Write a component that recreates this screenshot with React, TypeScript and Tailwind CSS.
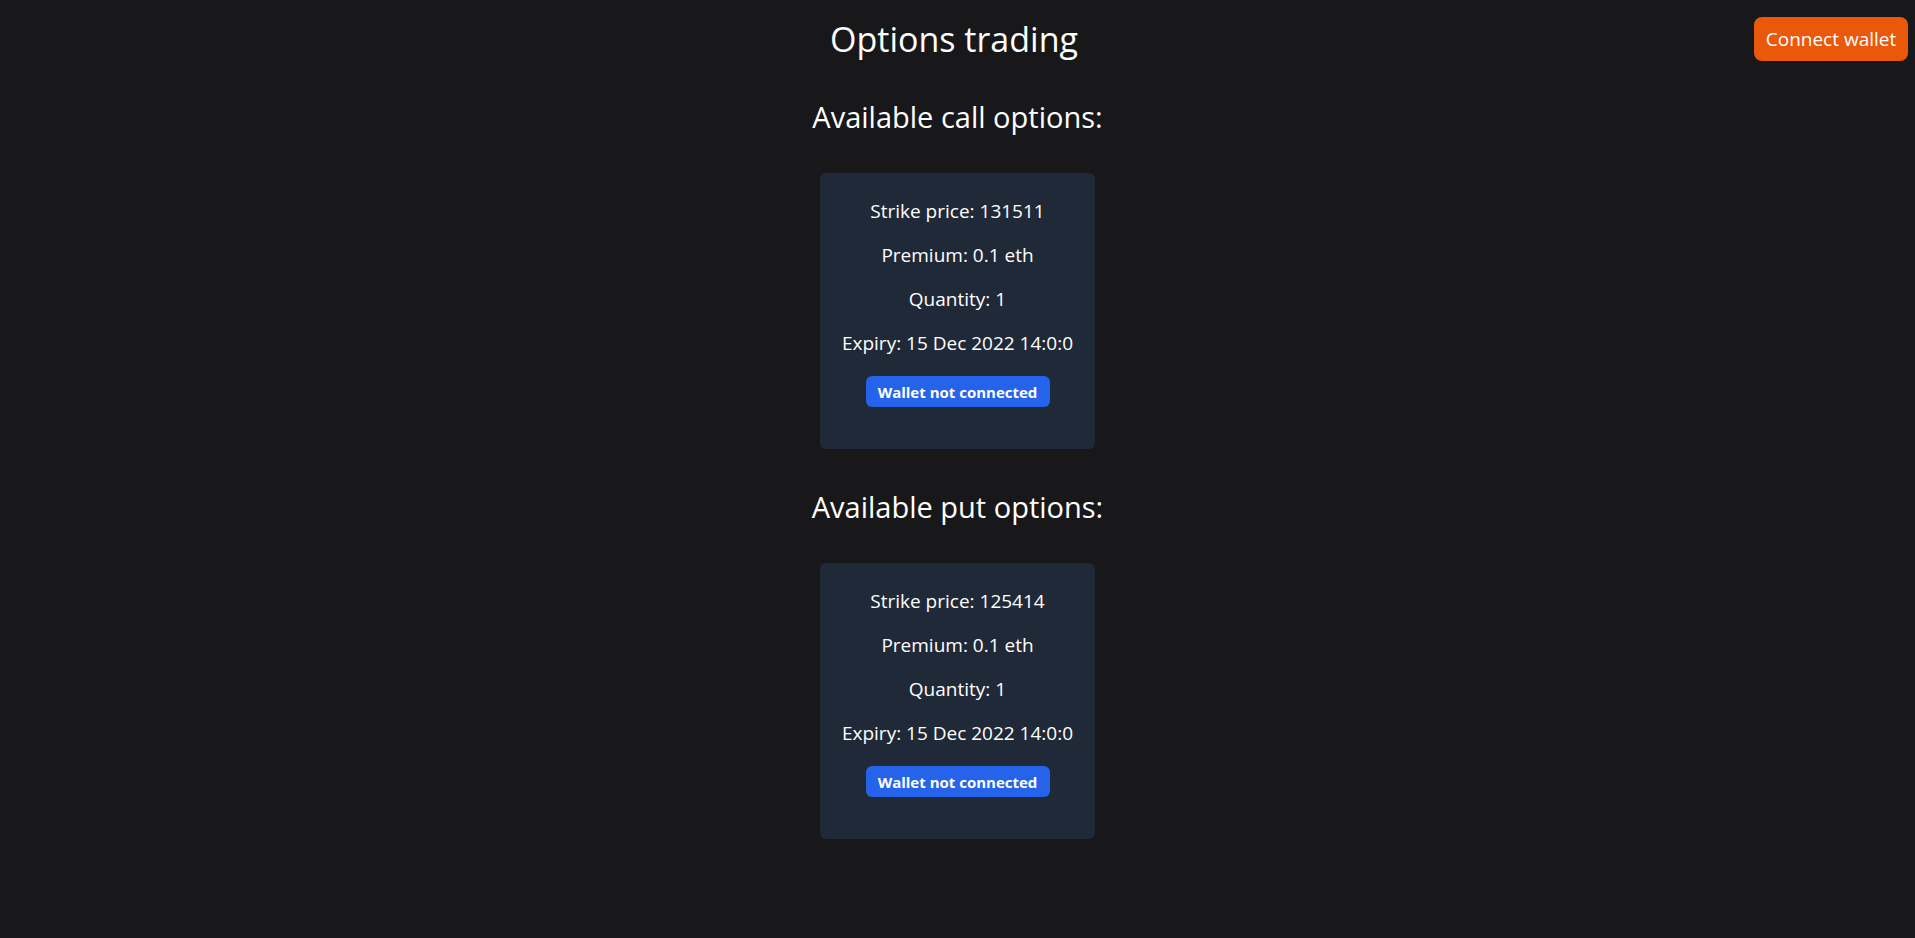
type Option = {
  strike: number;
  premium: string;
  quantity: number;
  expiry: string;
};

const calls: Option[] = [{ strike: 131511, premium: "0.1 eth", quantity: 1, expiry: "15 Dec 2022 14:0:0" }];
const puts: Option[] = [{ strike: 125414, premium: "0.1 eth", quantity: 1, expiry: "15 Dec 2022 14:0:0" }];

function OptionCard({ o }: { o: Option }) {
  return (
    <div className="flex w-[275px] flex-col items-center rounded-md bg-[#1f2937] px-5 pb-[42px] pt-6 text-[19px] leading-7">
      <p>Strike price: {o.strike}</p>
      <p className="mt-4">Premium: {o.premium}</p>
      <p className="mt-4">Quantity: {o.quantity}</p>
      <p className="mt-4">Expiry: {o.expiry}</p>
      <button className="mt-[19px] h-[31px] w-[184px] rounded-md bg-[#2563eb] text-[15px] font-bold text-white">
        Wallet not connected
      </button>
    </div>
  );
}

function Section({ title, items }: { title: string; items: Option[] }) {
  return (
    <section className="flex flex-col items-center">
      <h2 className="text-[29px] leading-9">{title}</h2>
      <div className="mt-[38px] flex flex-col items-center gap-6">
        {items.map((o) => (
          <OptionCard key={o.strike} o={o} />
        ))}
      </div>
    </section>
  );
}

export default function App() {
  return (
    <div className="min-h-screen bg-[#18181b] text-white [font-family:'Open_Sans',sans-serif]">
      <header className="grid grid-cols-[1fr_auto_1fr] items-start pr-[7px] pt-[17px]">
        <div />
        <h1 className="mt-[2px] text-[34px] leading-10">Options trading</h1>
        <div className="flex justify-end">
          <button className="h-[44px] w-[154px] rounded-lg bg-[#ea580c] text-[19px] text-white">Connect wallet</button>
        </div>
      </header>
      <main className="mt-[38px] flex flex-col items-center gap-[40px] pb-10">
        <Section title="Available call options:" items={calls} />
        <Section title="Available put options:" items={puts} />
      </main>
    </div>
  );
}
